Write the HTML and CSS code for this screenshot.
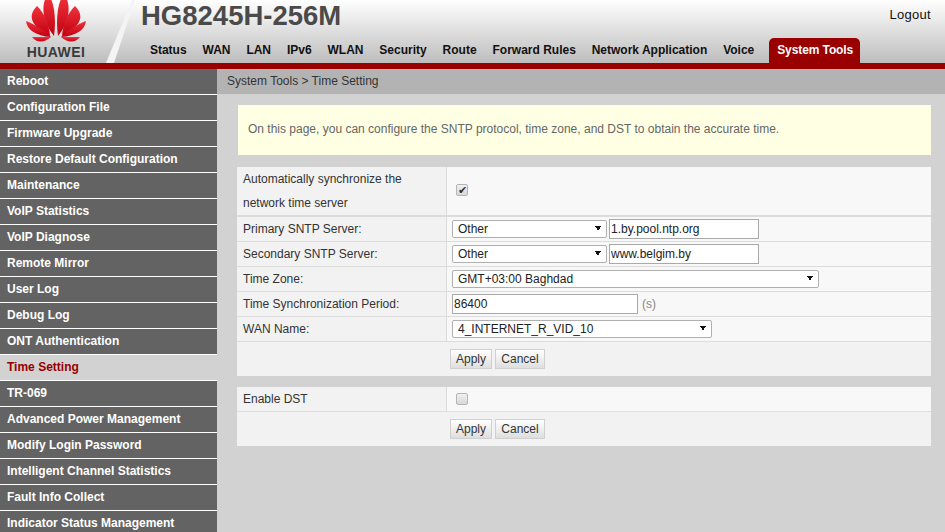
FILE: index.html

```html
<!DOCTYPE html>
<html lang="en">
<head>
    <meta charset="UTF-8">
    <meta name="viewport" content="width=device-width, initial-scale=1.0">
    <title>HG8245H-256M</title>
    <link rel="stylesheet" href="styles.css">
</head>
<body>
    <header class="top">
        <div class="logo">
            <svg class="logo-mark" width="60" height="43" viewBox="26 0 60 43">
                <defs>
                    <linearGradient id="petal" x1="0" y1="0" x2="0" y2="1">
                        <stop offset="0" stop-color="#f0323c"/>
                        <stop offset="1" stop-color="#c00010"/>
                    </linearGradient>
                </defs>
                <g fill="url(#petal)">
                    <path d="M46 -3 C41 8 43 22 54 36 C56 22 55 6 50 -3 Z"/>
                    <path d="M66 -3 C71 8 69 22 58 36 C56 22 57 6 62 -3 Z"/>
                    <path d="M37 6 C27 16 31 26 50 36 C49 24 45 14 37 6 Z"/>
                    <path d="M75 6 C85 16 81 26 62 36 C63 24 67 14 75 6 Z"/>
                    <path d="M26 21 C27 30 36 36 51 37 C44 30 36 25 26 21 Z"/>
                    <path d="M86 21 C85 30 76 36 61 37 C68 30 76 25 86 21 Z"/>
                    <path d="M32 37 L51 37 C46 42 37 44 32 37 Z"/>
                    <path d="M80 37 L61 37 C66 42 75 44 80 37 Z"/>
                </g>
            </svg>
            <span class="logo-text">HUAWEI</span>
        </div>
        <svg class="slash" width="30" height="63" viewBox="0 0 30 63"><polygon points="27,0 30,0 9,63 1,63" fill="#f4f4f4"/></svg>
        <div class="top-right">
            <div class="title-row">
                <h1>HG8245H-256M</h1>
                <a class="logout" href="#">Logout</a>
            </div>
            <nav class="tabs">
                <a href="#">Status</a>
                <a href="#">WAN</a>
                <a href="#">LAN</a>
                <a href="#">IPv6</a>
                <a href="#">WLAN</a>
                <a href="#">Security</a>
                <a href="#">Route</a>
                <a href="#">Forward Rules</a>
                <a href="#">Network Application</a>
                <a href="#">Voice</a>
                <a class="active" href="#">System Tools</a>
            </nav>
        </div>
    </header>

    <div class="page">
        <aside class="side">
            <a href="#">Reboot</a>
            <a href="#">Configuration File</a>
            <a href="#">Firmware Upgrade</a>
            <a href="#">Restore Default Configuration</a>
            <a href="#">Maintenance</a>
            <a href="#">VoIP Statistics</a>
            <a href="#">VoIP Diagnose</a>
            <a href="#">Remote Mirror</a>
            <a href="#">User Log</a>
            <a href="#">Debug Log</a>
            <a href="#">ONT Authentication</a>
            <a class="active" href="#">Time Setting</a>
            <a href="#">TR-069</a>
            <a href="#">Advanced Power Management</a>
            <a href="#">Modify Login Password</a>
            <a href="#">Intelligent Channel Statistics</a>
            <a href="#">Fault Info Collect</a>
            <a href="#">Indicator Status Management</a>
        </aside>

        <main class="content">
            <div class="crumb">System Tools &gt; Time Setting</div>
            <div class="panel">
                <p class="notice">On this page, you can configure the SNTP protocol, time zone, and DST to obtain the accurate time.</p>

                <div class="row row-tall">
                    <div class="label">Automatically synchronize the network time server</div>
                    <div class="value"><input class="check" type="checkbox" checked></div>
                </div>
                <div class="row">
                    <div class="label">Primary SNTP Server:</div>
                    <div class="value">
                        <select class="sel sel-s"><option>Other</option></select>
                        <input class="txt txt-s" type="text" value="1.by.pool.ntp.org">
                    </div>
                </div>
                <div class="row">
                    <div class="label">Secondary SNTP Server:</div>
                    <div class="value">
                        <select class="sel sel-s"><option>Other</option></select>
                        <input class="txt txt-s" type="text" value="www.belgim.by">
                    </div>
                </div>
                <div class="row">
                    <div class="label">Time Zone:</div>
                    <div class="value"><select class="sel sel-l"><option>GMT+03:00 Baghdad</option></select></div>
                </div>
                <div class="row">
                    <div class="label">Time Synchronization Period:</div>
                    <div class="value">
                        <input class="txt txt-m" type="text" value="86400">
                        <span class="unit">(s)</span>
                    </div>
                </div>
                <div class="row">
                    <div class="label">WAN Name:</div>
                    <div class="value"><select class="sel sel-m"><option>4_INTERNET_R_VID_10</option></select></div>
                </div>
                <div class="actions">
                    <button type="button">Apply</button>
                    <button type="button">Cancel</button>
                </div>

                <div class="row second">
                    <div class="label">Enable DST</div>
                    <div class="value"><input class="check" type="checkbox"></div>
                </div>
                <div class="actions">
                    <button type="button">Apply</button>
                    <button type="button">Cancel</button>
                </div>
            </div>
        </main>
    </div>
</body>
</html>
```

FILE: styles.css

```css
html, body {
    height: 100%;
}

body {
    margin: 0;
    overflow: hidden;
    background-color: #d2d2d2;
    font-family: "Liberation Sans", Arial, sans-serif;
    font-size: 12px;
    color: #333;
}

a {
    text-decoration: none;
}

/* top bar */
.top {
    display: flex;
    height: 63px;
    border-bottom: 6px solid #990000;
    background: linear-gradient(#ffffff, #bdbdbd);
}

.logo {
    display: flex;
    flex-direction: column;
    align-items: center;
    width: 112px;
    flex: none;
}

.logo-mark {
    display: block;
}

.logo-text {
    margin-top: 2px;
    font-size: 14px;
    line-height: 15px;
    font-weight: bold;
    letter-spacing: 0.4px;
    color: #3a3a3a;
}

.slash {
    flex: none;
    margin: 0 5px 0 -7px;
}

.top-right {
    flex: 1;
    display: flex;
    flex-direction: column;
}

.title-row {
    display: flex;
    justify-content: space-between;
    height: 38px;
    padding-right: 14px;
}

h1 {
    margin: 0 0 0 1px;
    font-size: 27.5px;
    line-height: 32px;
    color: #4a4a4a;
}

.logout {
    margin-top: 7px;
    font-size: 13px;
    line-height: 15px;
    letter-spacing: 0.3px;
    color: #111;
}

.tabs {
    display: flex;
    height: 25px;
    margin-left: 2px;
}

.tabs a {
    padding: 0 7.95px;
    line-height: 24px;
    font-weight: bold;
    color: #111;
}

.tabs a.active {
    margin-left: 7px;
    padding: 0 7px 0 8px;
    border-radius: 5px 5px 0 0;
    background-color: #990000;
    letter-spacing: -0.1px;
    color: #fff;
}

/* page below the bar */
.page {
    display: flex;
    height: calc(100% - 69px);
}

.side {
    width: 217px;
    flex: none;
}

.side a {
    display: block;
    height: 25px;
    padding-left: 7px;
    border-bottom: 1px solid #fff;
    background-color: #636363;
    line-height: 24px;
    font-weight: bold;
    color: #fff;
}

.side a.active {
    background-color: #d2d2d2;
    color: #990000;
}

.content {
    flex: 1;
}

.crumb {
    height: 25px;
    padding-left: 10px;
    background-color: #b3b3b3;
    line-height: 24px;
}

.panel {
    padding: 11px 14px 0 20px;
}

.notice {
    height: 50px;
    margin: 0 0 12px 1px;
    padding-left: 10px;
    background-color: #ffffe3;
    line-height: 49px;
    color: #666;
}

/* form rows */
.row {
    display: flex;
    height: 24px;
    border-bottom: 1px solid #dcdcdc;
    background-color: #f8f8f8;
}

.row-tall {
    height: 48px;
    border-bottom: 2px solid #dcdcdc;
}

.row-tall .check {
    margin-bottom: 2px;
}

.row.second {
    margin-top: 11px;
}

.label {
    width: 203px;
    flex: none;
    padding-left: 6px;
    border-right: 1px solid #dcdcdc;
    background-color: #f2f2f2;
    line-height: 24px;
}

.value {
    display: flex;
    align-items: center;
    flex: 1;
    padding-left: 5px;
}

.sel {
    height: 18px;
    padding: 0 0 0 5px;
    border: 1px solid #b0b0b0;
    border-radius: 2px;
    appearance: none;
    background-color: #fff;
    background-image:
        linear-gradient(to top right, transparent 50%, #111 50%),
        linear-gradient(to top left, transparent 50%, #111 50%);
    background-size: 3px 5px, 3px 5px;
    background-position: right 8px top 5px, right 5px top 5px;
    background-repeat: no-repeat;
    font-family: inherit;
    font-size: 12px;
    color: #222;
}

.sel-s { width: 155px; }
.sel-m { width: 260px; }
.sel-l { width: 367px; }

.txt {
    box-sizing: border-box;
    height: 20px;
    padding: 0 1px;
    border: 1px solid #a9a9a9;
    font-family: inherit;
    font-size: 12px;
    color: #222;
}

.txt-s {
    width: 150px;
    margin-left: 2px;
}

.txt-m { width: 186px; }

.unit {
    margin-left: 4px;
    color: #888;
}

.check {
    display: grid;
    place-items: center;
    box-sizing: border-box;
    width: 12px;
    height: 12px;
    margin: 0 0 0 4px;
    border: 1px solid #b5b5b5;
    border-radius: 2px;
    appearance: none;
    background: linear-gradient(#f0f0f0, #d8d8d8);
}

.check:checked::after {
    content: "\2714";
    font-size: 11px;
    line-height: 10px;
    color: #333;
}

.actions {
    display: flex;
    gap: 3px;
    height: 34px;
    padding: 7px 0 0 213px;
    box-sizing: border-box;
    background-color: #f2f2f2;
}

.actions button {
    width: 42px;
    height: 20px;
    padding: 0;
    border: 1px solid #d0d0d0;
    background: linear-gradient(#ffffff, #dedede);
    font-family: inherit;
    font-size: 12px;
    color: #333;
}

.actions button + button {
    width: 50px;
}
```
